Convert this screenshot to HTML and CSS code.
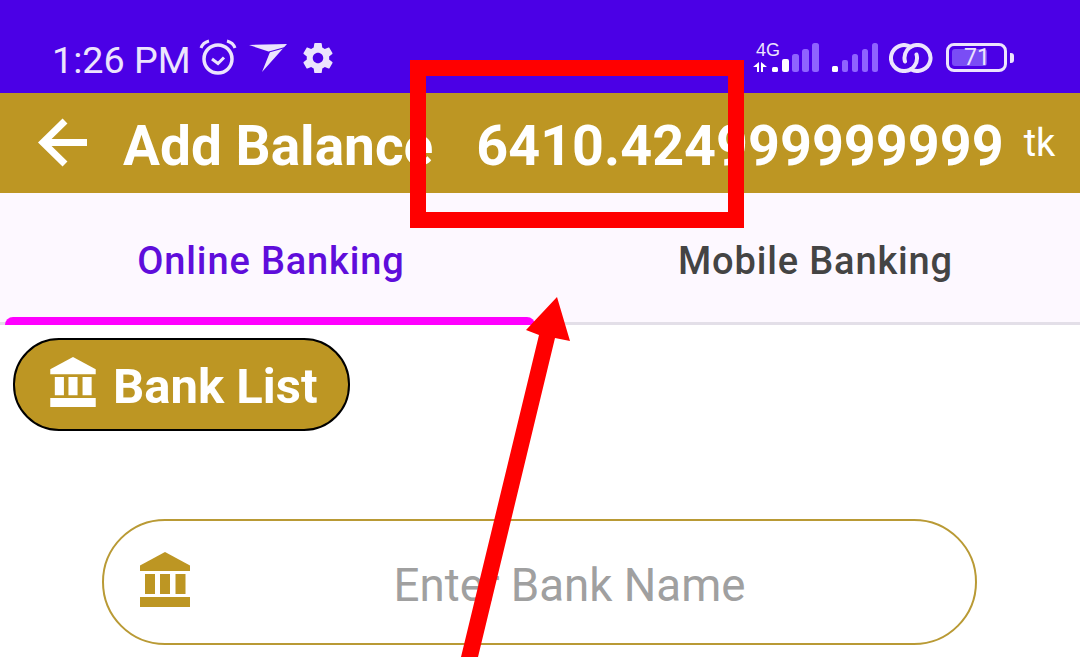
FILE: index.html
```html
<!DOCTYPE html>
<html lang="en">
<head>
    <meta charset="UTF-8">
    <meta name="viewport" content="width=device-width, initial-scale=1.0">
    <title>Add Balance</title>
    <link rel="stylesheet" href="styles.css">
</head>
<body>
    <svg class="defs" width="0" height="0">
        <symbol id="bank" viewBox="0 0 50 55">
            <path d="M25 0 50 13.500V19H0V13.500Z"/>
            <path d="M5 22h10v20H5zM20 22h10v20H20zM35.500 22h10v20h-10zM0 45h50v10H0z"/>
        </symbol>
    </svg>

    <div class="status-bar">
        <span class="time">1:26 PM</span>
        <svg class="alarm" width="38" height="38" viewBox="0 0 38 38" fill="none" stroke="#ece4fd">
            <circle cx="19" cy="21" r="14" stroke-width="3.500"/>
            <path d="M13 21l6 4.500 6-6" stroke-width="3"/>
            <path d="M2 10c1-3 4-6 8-7M36 10c-1-3-4-6-8-7" stroke-width="3"/>
        </svg>
        <svg class="send" width="40" height="30" viewBox="0 0 40 30" fill="#ece4fd">
            <path d="M1 2 39 1 14 29 22 9Z"/>
            <path d="M21 9 39 4" fill="none" stroke="#4b00e6" stroke-width="1.200"/>
        </svg>
        <svg class="gear" width="36" height="36" viewBox="0 0 24 24" fill="#ece4fd">
            <path d="M19.400 13c.04-.33.06-.66.06-1s-.02-.67-.07-1l2.110-1.650c.19-.15.24-.42.120-.64l-2-3.460c-.12-.22-.38-.31-.61-.22l-2.490 1c-.52-.4-1.080-.73-1.690-.98l-.38-2.650C14.460 2.180 14.250 2 14 2h-4c-.25 0-.46.18-.49.42l-.38 2.650c-.61.25-1.170.59-1.690.98l-2.490-1c-.23-.09-.49 0-.61.22l-2 3.460c-.13.22-.07.49.12.64L4.570 11c-.04.33-.07.67-.07 1s.03.67.07 1l-2.110 1.650c-.19.15-.24.42-.12.64l2 3.460c.12.22.38.31.61.22l2.490-1c.52.4 1.080.73 1.690.98l.38 2.650c.03.24.24.42.49.42h4c.25 0 .46-.18.49-.42l.38-2.650c.61-.25 1.170-.59 1.690-.98l2.490 1c.23.09.49 0 .61-.22l2-3.460c.12-.22.07-.49-.12-.64L19.400 13zM12 15.500c-1.930 0-3.500-1.570-3.500-3.500s1.570-3.500 3.500-3.500 3.500 1.570 3.500 3.500-1.570 3.500-3.500 3.500z"/>
        </svg>

        <div class="status-right">
            <div class="network">
                <span class="net-label">4G</span>
                <svg width="66" height="29" viewBox="0 0 66 29">
                    <path d="M0 24 6 19V29H4V24ZM8 19 14 24H10V29H8Z" fill="#fff"/>
                    <g fill="#fff">
                        <rect x="19" y="24" width="6" height="5" rx="1.500"/>
                        <rect x="29" y="16" width="7" height="13" rx="2"/>
                    </g>
                    <g fill="#8f63ff">
                        <rect x="39" y="11" width="7" height="18" rx="2.500"/>
                        <rect x="49" y="6" width="7" height="23" rx="2.500"/>
                        <rect x="59" y="0" width="7" height="29" rx="2.500"/>
                    </g>
                </svg>
            </div>
            <svg class="signal" width="46" height="29" viewBox="0 0 46 29">
                <rect x="0" y="23" width="6" height="6" rx="1.500" fill="#fff"/>
                <g fill="#8f63ff">
                    <rect x="10" y="17" width="6" height="12" rx="2"/>
                    <rect x="20" y="11" width="6" height="18" rx="2.500"/>
                    <rect x="30" y="6" width="6" height="23" rx="2.500"/>
                    <rect x="40" y="0" width="6" height="29" rx="2.500"/>
                </g>
            </svg>
            <svg class="link" width="44" height="30" viewBox="0 0 44 30" fill="none" stroke="#ece4fd" stroke-width="4" stroke-linecap="round">
                <path d="M21.500 3.800A13 13 0 1 0 27.500 11.500"/>
                <path d="M22 26.200A13 13 0 1 0 16 18.500"/>
            </svg>
            <div class="battery">
                <div class="battery-body">
                    <div class="battery-fill"></div>
                    <span class="battery-text">71</span>
                </div>
                <div class="battery-cap"></div>
            </div>
        </div>
    </div>

    <div class="app-bar">
        <svg class="back" width="50" height="50" viewBox="0 0 50 50" fill="none" stroke="#fff" stroke-width="7">
            <path d="M49 24.500H5M27 3 5 24.500 27 46"/>
        </svg>
        <span class="app-title">Add Balance</span>
        <span class="amount">6410.424999999999</span>
        <span class="unit">tk</span>
    </div>

    <div class="tabs">
        <div class="tab tab-active">Online Banking</div>
        <div class="tab tab-right">Mobile Banking</div>
    </div>

    <div class="content">
        <button class="bank-list">
            <svg width="46" height="50" fill="#fff"><use href="#bank"/></svg>
            Bank List
        </button>
        <div class="bank-input">
            <svg width="50" height="55" fill="#bd9623"><use href="#bank"/></svg>
            <span class="placeholder">Enter Bank Name</span>
        </div>
    </div>

    <!-- red annotation drawn over the screenshot -->
    <svg class="annotation" width="1080" height="657" viewBox="0 0 1080 657">
        <rect x="418" y="68" width="318" height="152" fill="none" stroke="#ff0000" stroke-width="16"/>
        <path d="M557 297 570 341 555 338 478 657H461L539 335 526 330Z" fill="#ff0000"/>
    </svg>
</body>
</html>
```

FILE: styles.css
```css
html, body {
    margin: 0;
    padding: 0;
    height: 657px;
    overflow: hidden;
}
body {
    position: relative;
    font-family: Roboto, "Liberation Sans", sans-serif;
    background-color: #fff;
}
.defs {
    position: absolute;
}
.status-bar {
    height: 93px;
    box-sizing: border-box;
    padding: 27px 66px 0 52px;
    display: flex;
    align-items: center;
    background-color: #4b00e6;
    color: #ece4fd;
}
.time {
    font-size: 37.700px;
    line-height: 40px;
}
.alarm {
    margin-left: 8px;
    margin-top: -7px;
}
.send {
    margin-left: 11px;
    margin-top: -5px;
}
.gear {
    margin-left: 12px;
    margin-top: -5px;
}
.status-right {
    margin-left: auto;
    margin-top: -5px;
    display: flex;
    align-items: center;
}
.network {
    position: relative;
    width: 66px;
    height: 29px;
}
.net-label {
    position: absolute;
    left: 3px;
    top: -3px;
    font-family: "Liberation Sans", sans-serif;
    font-size: 18px;
    line-height: 20px;
}
.signal {
    margin-left: 13px;
}
.link {
    margin-left: 11px;
}
.battery {
    margin-left: 13px;
    display: flex;
    align-items: center;
    gap: 3px;
}
.battery-body {
    position: relative;
    box-sizing: border-box;
    width: 61px;
    height: 29px;
    border: 3px solid #ece4fd;
    border-radius: 8px;
}
.battery-fill {
    position: absolute;
    left: 3px;
    top: 3px;
    width: 35px;
    height: 17px;
    background-color: #7a4df5;
    border-radius: 3px;
}
.battery-text {
    position: absolute;
    left: 15px;
    top: -1px;
    font-size: 23px;
    line-height: 25px;
}
.battery-cap {
    width: 4px;
    height: 10px;
    background-color: #ece4fd;
    border-radius: 0 3px 3px 0;
}
.app-bar {
    height: 100px;
    box-sizing: border-box;
    display: flex;
    align-items: center;
    padding-left: 38px;
    background-color: #bd9623;
    color: #fff;
}
.back {
    flex: none;
}
.app-title {
    margin-left: 35px;
    padding-top: 6px;
    font-size: 55px;
    font-weight: 700;
}
.amount {
    margin-left: 43px;
    padding-top: 6px;
    font-size: 55.700px;
    font-weight: 700;
}
.unit {
    margin-left: 20px;
    font-size: 38px;
}
.tabs {
    height: 132px;
    box-sizing: border-box;
    display: flex;
    background-color: #fdf8ff;
    border-bottom: 3px solid #e3dfe8;
}
.tab {
    width: 50%;
    box-sizing: border-box;
    display: flex;
    justify-content: center;
    padding-top: 44px;
    font-size: 38px;
    line-height: 48px;
    font-weight: 500;
    color: #444;
    letter-spacing: 0.850px;
}
.tab-right {
    padding-left: 11px;
}
.tab-active {
    position: relative;
    padding-left: 2px;
    color: #5f0ddb;
}
.tab-active::after {
    content: "";
    position: absolute;
    left: 5px;
    right: 5px;
    bottom: -3px;
    height: 8px;
    background-color: #ff00ff;
    border-radius: 8px 8px 0 0;
}
.content {
    padding: 13px 103px 0 13px;
}
.bank-list {
    display: flex;
    align-items: center;
    gap: 17px;
    width: 337px;
    height: 93px;
    box-sizing: border-box;
    padding: 4px 0 0 35px;
    background-color: #bd9623;
    border: 2px solid #000;
    border-radius: 46px;
    color: #fff;
    font-family: inherit;
    font-size: 49px;
    font-weight: 700;
}
.bank-list svg {
    margin-bottom: 10px;
}
.bank-input {
    position: relative;
    margin: 88px 0 0 89px;
    height: 126px;
    box-sizing: border-box;
    display: flex;
    align-items: center;
    justify-content: center;
    padding: 7px 0 0 60px;
    border: 2px solid #b99a35;
    border-radius: 63px;
}
.bank-input svg {
    position: absolute;
    left: 36px;
    top: 31px;
}
.placeholder {
    font-size: 45.700px;
    color: #a0a0a0;
}
.annotation {
    position: absolute;
    left: 0;
    top: 0;
}
```
